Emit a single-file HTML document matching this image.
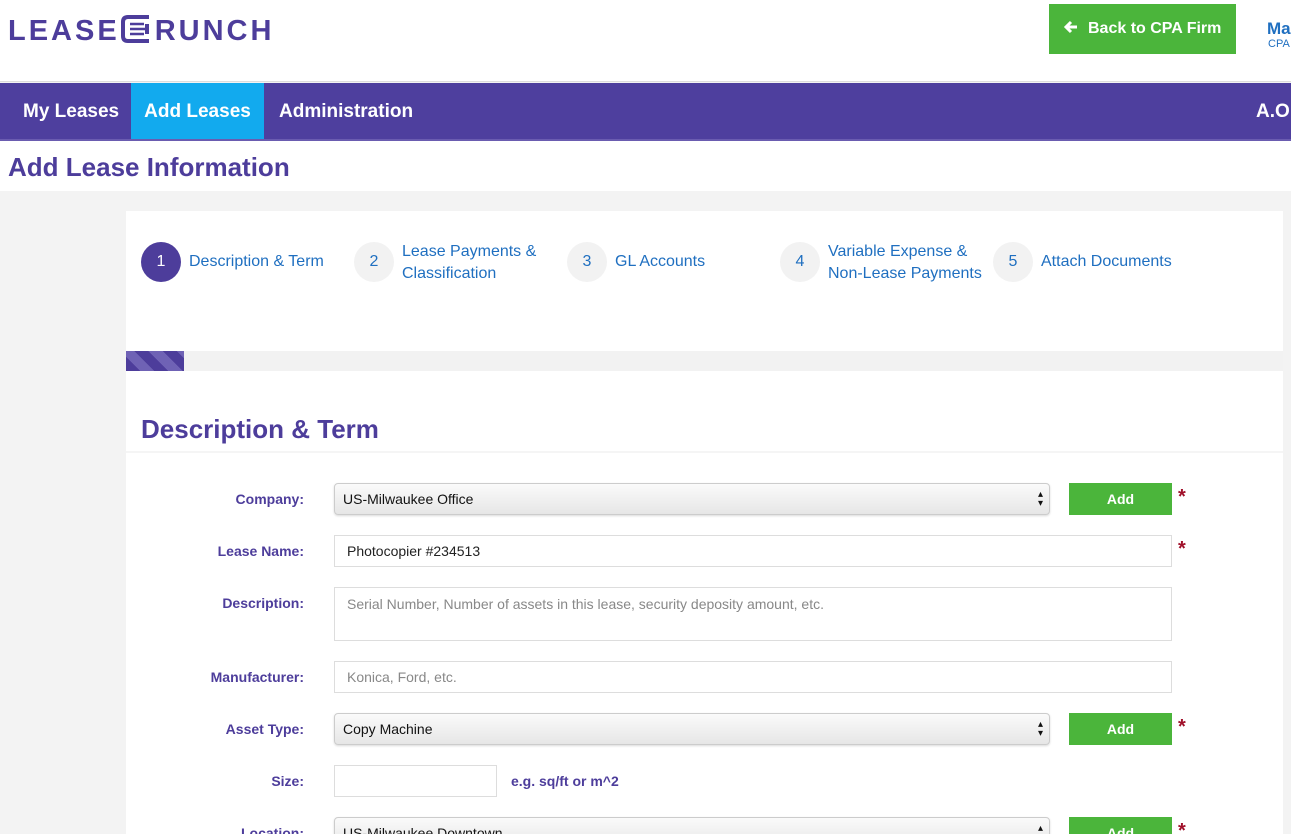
<!DOCTYPE html>
<html><head><meta charset="utf-8"><style>
*{box-sizing:border-box;margin:0;padding:0}
html,body{width:1291px;height:834px;overflow:hidden}
body{background:#f3f3f3;font-family:"Liberation Sans",sans-serif;position:relative}
.abs{position:absolute}
.hdr{left:0;top:0;width:1291px;height:82px;background:#fff;border-bottom:1px solid #ddd}
.nav{left:0;top:83px;width:1291px;height:58px;background:#4e3f9e;border-bottom:2px solid #6a5cb0}
.nav div{position:absolute;top:0;height:56px;line-height:58px;color:#fff;font-weight:bold;font-size:19px}
.tb{left:0;top:141px;width:1291px;height:50px;background:#fff}
.card{left:126px;top:211px;width:1157px;height:640px;background:#fff}
.step{position:absolute;top:242px;width:40px;height:40px;border-radius:50%;background:#f2f2f2;color:#1f6fc0;font-size:16px;text-align:center;line-height:40px}
.st{position:absolute;color:#1f6fc0;font-size:16px;line-height:22px}
.lbl{position:absolute;right:987px;color:#4d3d9b;font-weight:bold;font-size:14px}
.inp{position:absolute;left:334px;background:#fff;border:1px solid #ddd;font-size:14px;padding-left:12px;color:#222}
.sel{position:absolute;left:334px;width:716px;height:32px;border-radius:4px;border:1px solid #ccc;background:linear-gradient(#fafafa,#e6e6e6);font-size:14px;line-height:30px;padding-left:8px;color:#111;box-shadow:0 1px 2px rgba(0,0,0,.15)}
.sel:after{content:"▴\A▾";white-space:pre;position:absolute;right:6px;top:6px;font-size:10px;line-height:9px}
.add{position:absolute;left:1069px;width:103px;height:32px;background:#4bb53b;color:#fff;font-weight:bold;font-size:14px;text-align:center;line-height:32px}
.ast{position:absolute;left:1178px;color:#a0102a;font-size:20px;font-weight:bold}
.ph{color:#888}
</style></head><body>
<div class="abs hdr"></div>
<div class="abs" style="left:8px;top:14px;font-size:29px;font-weight:bold;color:#4d3d9b;letter-spacing:3px;white-space:nowrap">LEASE<svg width="32" height="30" viewBox="0 0 32 30" style="vertical-align:-4px;margin:0 3px 0 0"><path d="M29 3H8Q3 3 3 8V22Q3 27 8 27H29" fill="none" stroke="#4d3d9b" stroke-width="4"/><path d="M10 10H24M10 15H26M10 20H24" stroke="#4d3d9b" stroke-width="2.5"/><path d="M27 10V20" stroke="#4d3d9b" stroke-width="4"/></svg>RUNCH</div>
<div class="abs" style="left:1049px;top:4px;width:187px;height:50px;background:#4bb53b;color:#fff;font-weight:bold;font-size:16px;line-height:50px;padding-left:15px;white-space:nowrap"><svg width="14" height="14" viewBox="0 0 14 14" style="vertical-align:-1px;margin-right:10px"><path d="M13 7H3M7 2L2 7L7 12" fill="none" stroke="#fff" stroke-width="3"/></svg>Back to CPA Firm</div>
<div class="abs" style="left:1267px;top:19px;color:#1f6fc0;font-weight:bold;font-size:17px">Ma</div>
<div class="abs" style="left:1268px;top:38px;color:#1f6fc0;font-size:11px">CPA</div>
<div class="abs nav">
<div style="left:23px">My Leases</div>
<div style="left:131px;width:133px;background:#12aaee;text-align:center">Add Leases</div>
<div style="left:279px">Administration</div>
<div style="left:1256px">A.O</div>
</div>
<div class="abs tb"><div style="position:absolute;left:8px;top:11px;font-size:26px;font-weight:bold;color:#4d3d9b">Add Lease Information</div></div>
<div class="abs card"></div>
<div class="step" style="left:141px;background:#4d3d9b;color:#fff">1</div>
<div class="st" style="left:189px;top:251px">Description &amp; Term</div>
<div class="step" style="left:354px">2</div>
<div class="st" style="left:402px;top:241px">Lease Payments &amp;<br>Classification</div>
<div class="step" style="left:567px">3</div>
<div class="st" style="left:615px;top:251px">GL Accounts</div>
<div class="step" style="left:780px">4</div>
<div class="st" style="left:828px;top:241px">Variable Expense &amp;<br>Non-Lease Payments</div>
<div class="step" style="left:993px">5</div>
<div class="st" style="left:1041px;top:251px">Attach Documents</div>
<div class="abs" style="left:126px;top:351px;width:1157px;height:20px;background:#f2f2f2"></div>
<div class="abs" style="left:126px;top:351px;width:58px;height:20px;background:repeating-linear-gradient(45deg,#4d3d9b 0 10px,#6f62b5 10px 20px)"></div>
<div class="abs" style="left:141px;top:414px;font-size:26px;font-weight:bold;color:#4d3d9b">Description &amp; Term</div>
<div class="abs" style="left:126px;top:451px;width:1157px;height:2px;background:#f5f5f5"></div>

<div class="lbl" style="top:491px">Company:</div>
<div class="sel" style="top:483px">US-Milwaukee Office</div>
<div class="add" style="top:483px">Add</div><div class="ast" style="top:486px">*</div>

<div class="lbl" style="top:543px">Lease Name:</div>
<div class="inp" style="top:535px;width:838px;height:32px;line-height:30px">Photocopier #234513</div><div class="ast" style="top:538px">*</div>

<div class="lbl" style="top:595px">Description:</div>
<div class="inp ph" style="top:587px;width:838px;height:54px;padding-top:8px">Serial Number, Number of assets in this lease, security deposity amount, etc.</div>

<div class="lbl" style="top:669px">Manufacturer:</div>
<div class="inp ph" style="top:661px;width:838px;height:32px;line-height:30px">Konica, Ford, etc.</div>

<div class="lbl" style="top:721px">Asset Type:</div>
<div class="sel" style="top:713px">Copy Machine</div>
<div class="add" style="top:713px">Add</div><div class="ast" style="top:716px">*</div>

<div class="lbl" style="top:773px">Size:</div>
<div class="inp" style="top:765px;width:163px;height:32px"></div>
<div class="abs" style="left:511px;top:773px;color:#4d3d9b;font-weight:bold;font-size:14px">e.g. sq/ft or m^2</div>

<div class="lbl" style="top:825px">Location:</div>
<div class="sel" style="top:817px">US-Milwaukee Downtown</div>
<div class="add" style="top:817px">Add</div><div class="ast" style="top:820px">*</div>
</body></html>
